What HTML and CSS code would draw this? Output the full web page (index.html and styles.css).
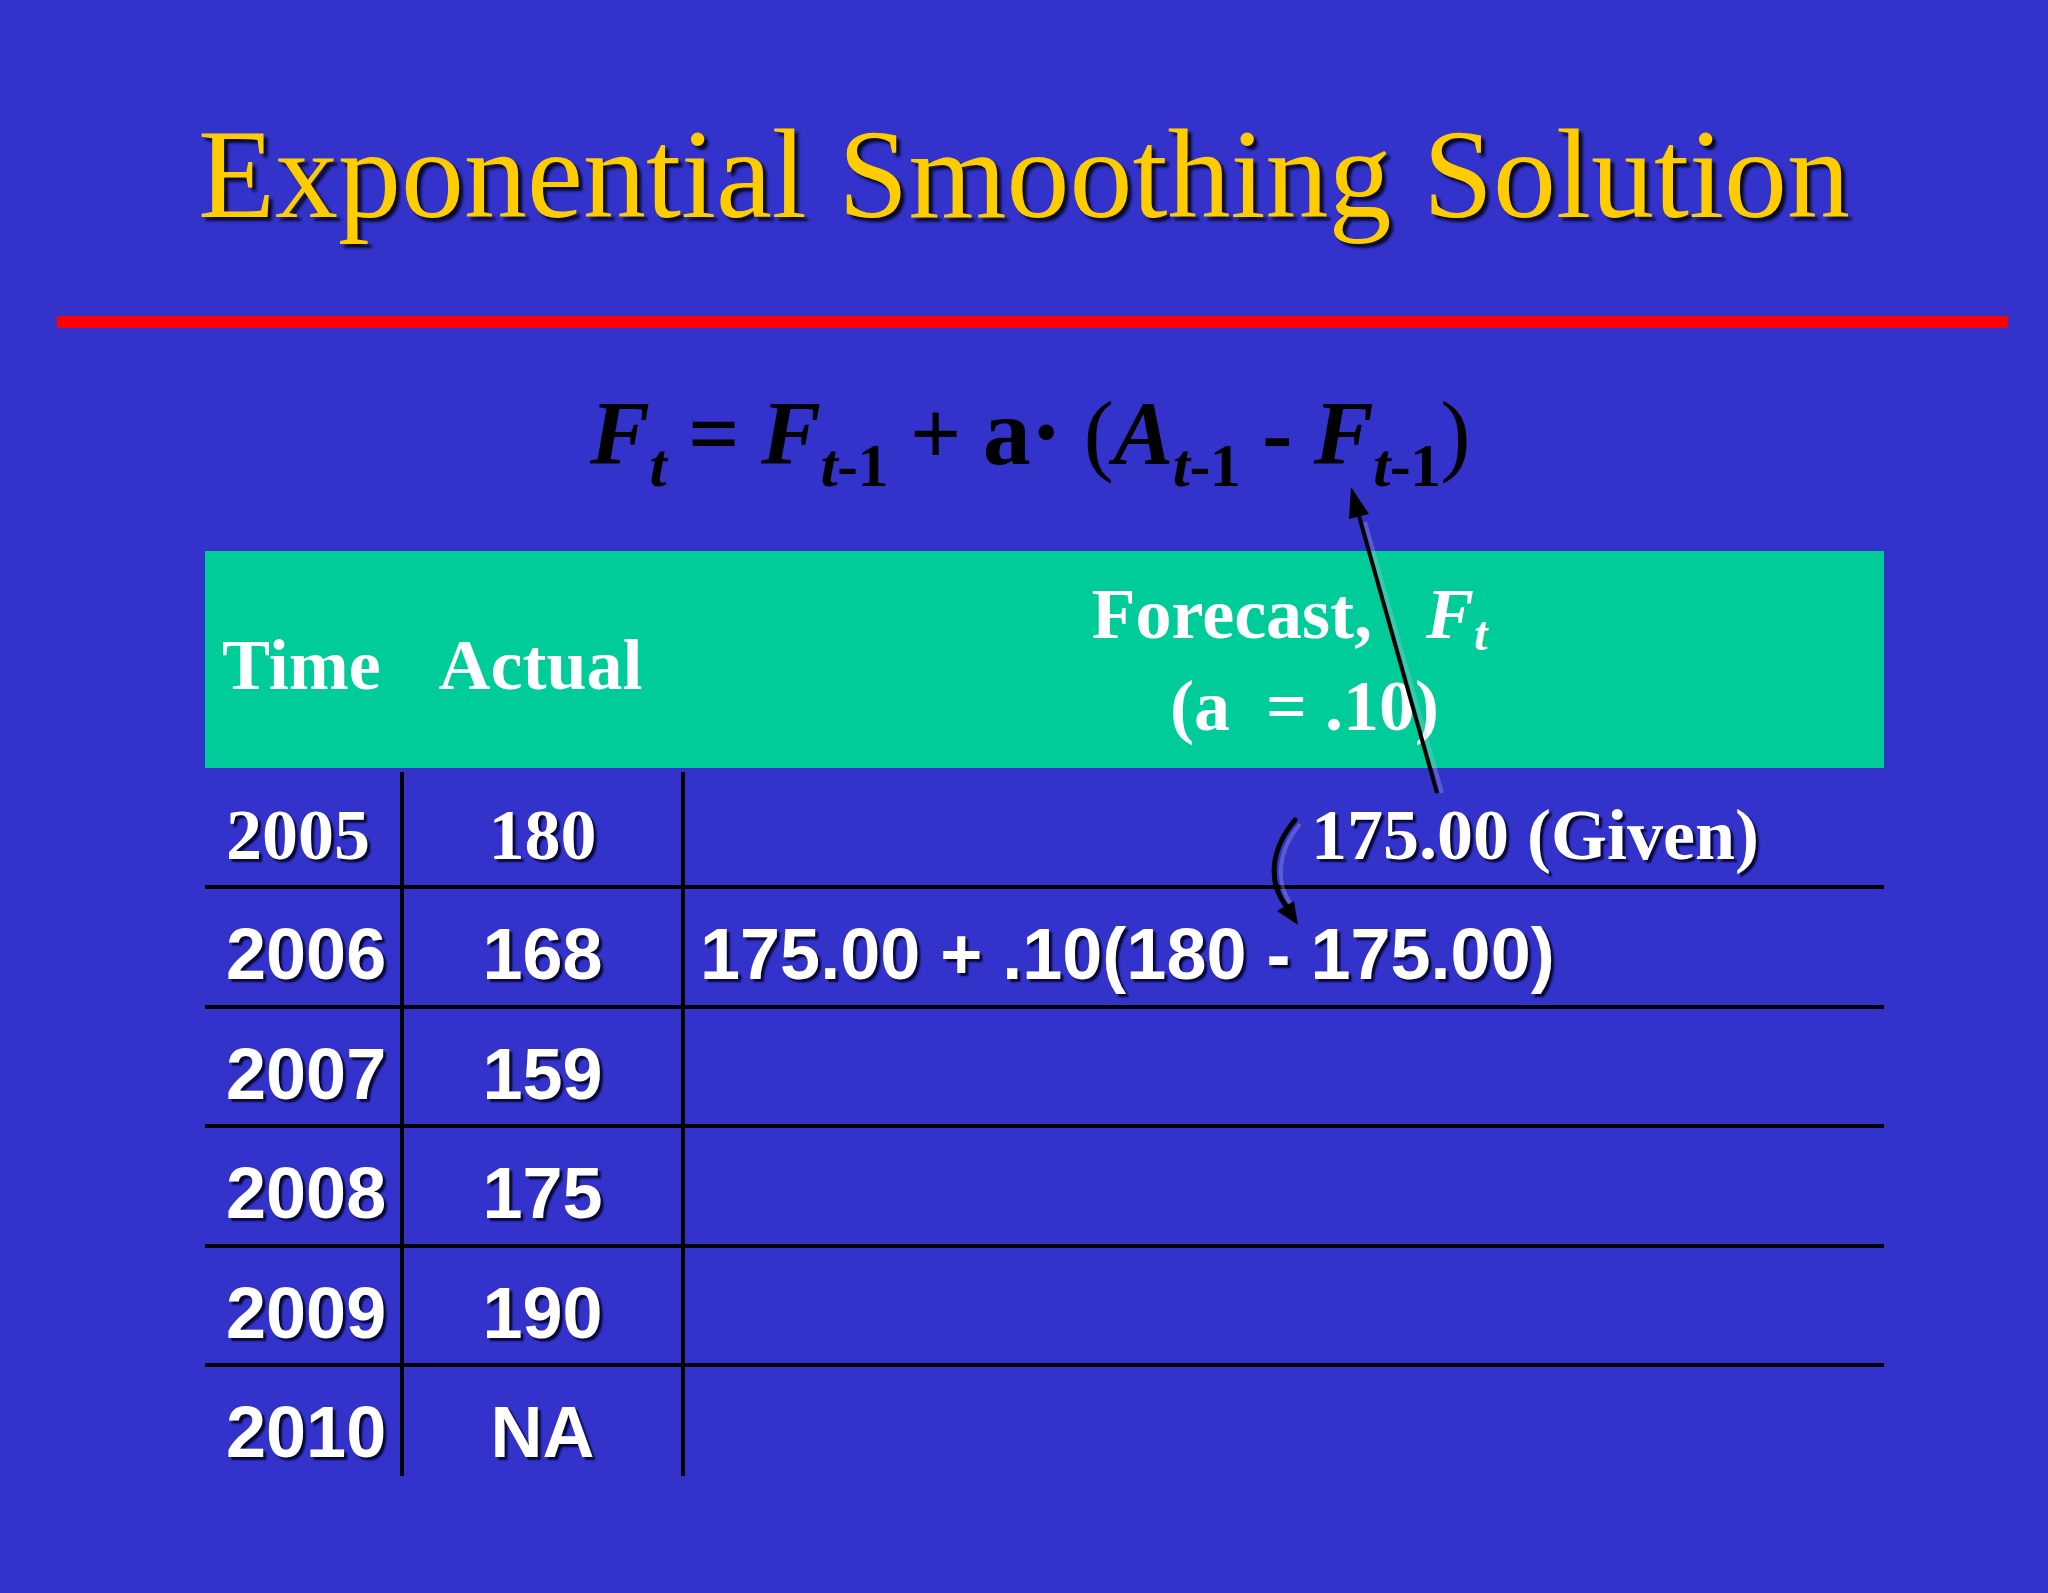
FILE: index.html
```html
<!DOCTYPE html>
<html>
<head>
<meta charset="utf-8">
<link rel="stylesheet" href="styles.css">
</head>
<body>
<div class="slide">
  <h1 class="title">Exponential Smoothing Solution</h1>
  <div class="rule"></div>
  <div class="formula"><i>F</i><span class="sub"><i>t</i></span> <b class="up">=</b> <i>F</i><span class="sub"><i>t</i><b class="up">-1</b></span> <b class="up">+</b> <b class="up alpha">a·</b> <span class="paren">(</span><i>A</i><span class="sub"><i>t</i><b class="up">-1</b></span> <b class="up">-</b> <i>F</i><span class="sub"><i>t</i><b class="up">-1</b></span><span class="paren">)</span></div>

  <div class="table">
    <div class="thead">
      <div class="hcell hcell-time">Time</div>
      <div class="hcell hcell-actual">Actual</div>
      <div class="hcell hcell-forecast">
        <div class="hline hline-forecast">Forecast,&nbsp;&nbsp; <i>F<span class="hsub">t</span></i></div>
        <div class="hline hline-alpha">(a &nbsp;= .10)</div>
      </div>
    </div>
    <div class="tbody">
      <div class="row row-first">
        <div class="cell c1">2005</div>
        <div class="cell c2">180</div>
        <div class="cell c3 c3-given">175.00 (Given)</div>
      </div>
      <div class="row">
        <div class="cell c1">2006</div>
        <div class="cell c2">168</div>
        <div class="cell c3">175.00 + .10(180 - 175.00)</div>
      </div>
      <div class="row">
        <div class="cell c1">2007</div>
        <div class="cell c2">159</div>
        <div class="cell c3"></div>
      </div>
      <div class="row">
        <div class="cell c1">2008</div>
        <div class="cell c2">175</div>
        <div class="cell c3"></div>
      </div>
      <div class="row">
        <div class="cell c1">2009</div>
        <div class="cell c2">190</div>
        <div class="cell c3"></div>
      </div>
      <div class="row row-last">
        <div class="cell c1">2010</div>
        <div class="cell c2">NA</div>
        <div class="cell c3"></div>
      </div>
    </div>
  </div>

  <svg class="arrows" width="2048" height="1593" viewBox="0 0 2048 1593">
    <g class="arrow-shadow">
      <line x1="1442" y1="793" x2="1365" y2="522" />
      <path d="M1300 824 C1277 852 1275 882 1292 906" fill="none" />
    </g>
    <line x1="1437" y1="793" x2="1359" y2="516" stroke="#000" stroke-width="4" />
    <polygon points="1351,487 1369,514 1349,519" fill="#000" />
    <path d="M1295 820 C1270 850 1268 882 1286 906" fill="none" stroke="#000" stroke-width="5" stroke-linecap="round" />
    <polygon points="1298,925 1294,901 1277,911" fill="#000" />
  </svg>
</div>
</body>
</html>
```

FILE: styles.css
```css
html, body {
  margin: 0;
  padding: 0;
  background: #3333CC;
}

.slide {
  position: relative;
  width: 2048px;
  height: 1593px;
  background: #3333CC;
  overflow: hidden;
}

.title {
  margin: 0;
  padding-top: 112px;
  text-align: center;
  font-family: "Liberation Serif", "Times New Roman", serif;
  font-weight: normal;
  font-size: 126px;
  line-height: 126px;
  color: #FFCC00;
  text-shadow: 4px 4px 3px rgba(0, 0, 0, 0.8);
  white-space: nowrap;
}

.rule {
  margin: 78px 40px 0 57px;
  height: 12px;
  background: #FF0000;
}

.formula {
  margin-top: 54px;
  padding-left: 12px;
  text-align: center;
  font-family: "Liberation Serif", "Times New Roman", serif;
  font-style: italic;
  font-weight: bold;
  font-size: 90px;
  line-height: 100px;
  color: #000;
  white-space: pre;
  letter-spacing: -0.5px;
}

.formula i {
  font-style: italic;
}

.formula .up {
  font-style: normal;
  font-weight: bold;
}

.formula .alpha {
  font-size: 96px;
}

.formula .sub {
  font-size: 62px;
  line-height: 0;
  vertical-align: -22px;
}

.formula .paren {
  font-style: normal;
  font-weight: normal;
}

.table {
  margin-top: 67px;
  margin-left: 205px;
  width: 1679px;
}

.thead {
  display: grid;
  grid-template-columns: 195px 281px 1fr;
  height: 217px;
  background: #00CC99;
  color: #fff;
  font-family: "Liberation Serif", "Times New Roman", serif;
  font-weight: bold;
  font-size: 72px;
  line-height: 72px;
}

.hcell {
  align-self: center;
  white-space: nowrap;
}

.hcell-time {
  padding-left: 17px;
  padding-top: 10px;
}

.hcell-actual {
  text-align: center;
  padding-top: 10px;
}

.hcell-forecast {
  text-align: center;
  line-height: 92px;
}

.hsub {
  font-size: 48px;
  vertical-align: -12px;
  line-height: 0;
}

.hline-forecast {
  padding-left: 14px;
}

.hline-alpha {
  padding-left: 44px;
}

.tbody {
  margin-top: 4px;
}

.row {
  display: grid;
  grid-template-columns: 195px 281px 1fr;
  height: 115.5px;
  border-bottom: 4px solid #000;
  color: #fff;
  font-family: "Liberation Sans", Arial, sans-serif;
  font-weight: bold;
  font-size: 72px;
  line-height: 72px;
  text-shadow: 3px 3px 2px rgba(0, 0, 30, 0.85);
}

.row-first {
  height: 113px;
  font-family: "Liberation Serif", "Times New Roman", serif;
}

.row-last {
  height: 109px;
  border-bottom: none;
}

.cell {
  padding-top: 29px;
  white-space: nowrap;
}

.row-first .cell {
  padding-top: 27px;
}

.c1 {
  padding-left: 21px;
}

.c2 {
  border-left: 4px solid #000;
  text-align: center;
}

.c3 {
  border-left: 4px solid #000;
  padding-left: 15px;
}

.c3-given {
  padding-left: 626px;
}

.arrows {
  position: absolute;
  left: 0;
  top: 0;
  pointer-events: none;
}

.arrow-shadow line,
.arrow-shadow path {
  stroke: rgba(190, 190, 225, 0.3);
  stroke-width: 4;
}
```
